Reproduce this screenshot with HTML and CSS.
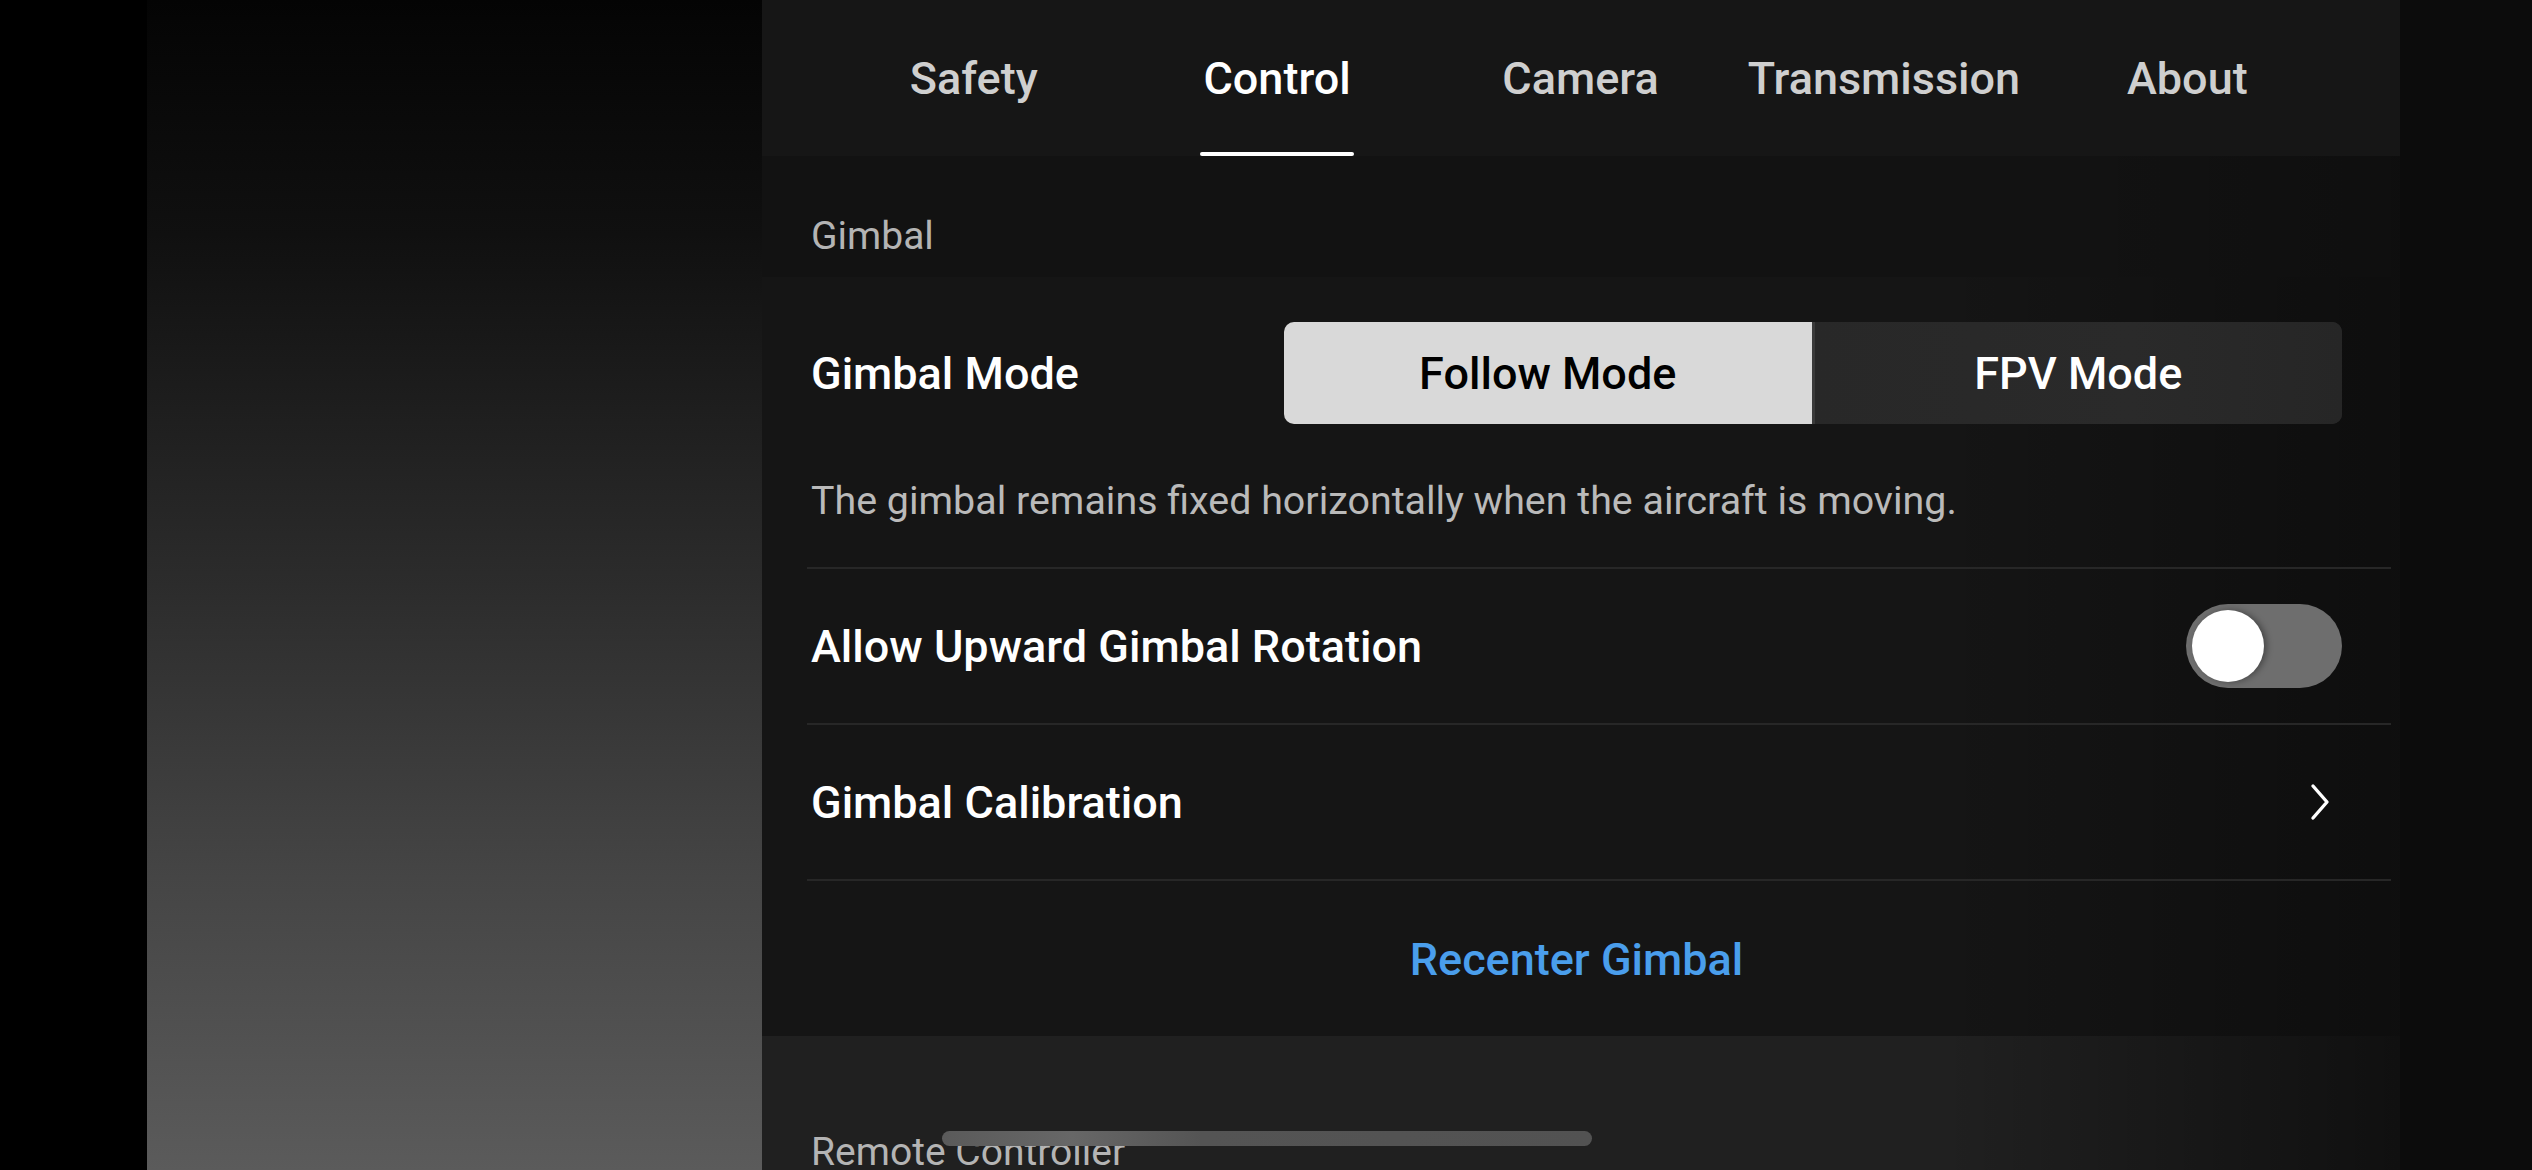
FILE: index.html
```html
<!DOCTYPE html>
<html lang="en">
<head>
<meta charset="utf-8">
<title>Control</title>
<link rel="stylesheet" href="styles.css">
</head>
<body>
<div class="screen">
  <div class="edge"></div>
  <div class="preview"></div>
  <main class="panel">
    <nav class="tabs">
      <div class="tab"><span class="tab-label">Safety</span></div>
      <div class="tab active"><span class="tab-label">Control</span></div>
      <div class="tab"><span class="tab-label">Camera</span></div>
      <div class="tab"><span class="tab-label">Transmission</span></div>
      <div class="tab"><span class="tab-label">About</span></div>
    </nav>
    <div class="section-head"><span class="section-label">Gimbal</span></div>
    <section class="card">
      <div class="mode-block">
        <div class="mode-row">
          <span class="row-title">Gimbal Mode</span>
          <div class="segmented">
            <div class="seg seg-on">Follow Mode</div>
            <div class="seg seg-off">FPV Mode</div>
          </div>
        </div>
        <p class="desc">The gimbal remains fixed horizontally when the aircraft is moving.</p>
      </div>
      <div class="row">
        <span class="row-title">Allow Upward Gimbal Rotation</span>
        <div class="toggle"><div class="thumb"></div></div>
      </div>
      <div class="row">
        <span class="row-title">Gimbal Calibration</span>
        <svg class="chevron" width="22" height="38" viewBox="0 0 22 38"><path d="M4 3 L18 19 L4 35" fill="none" stroke="#ffffff" stroke-width="3.4" stroke-linecap="round" stroke-linejoin="round"/></svg>
      </div>
      <div class="row row-last">
        <span class="action">Recenter Gimbal</span>
      </div>
    </section>
    <div class="bottom">
      <span class="section-label">Remote Controller</span>
    </div>
    <div class="scroll-indicator"></div>
  </main>
  <div class="right-strip"></div>
</div>
</body>
</html>
```

FILE: styles.css
```css
* { box-sizing: border-box; }

html, body {
  margin: 0;
  padding: 0;
  background: #000;
}

body {
  font-family: Roboto, "Noto Sans", "Liberation Sans", sans-serif;
  color: #fff;
}

.screen {
  width: 2532px;
  height: 1170px;
  display: flex;
  overflow: hidden;
}

.edge {
  width: 147px;
  flex: none;
  background: #000;
}

.preview {
  width: 615px;
  flex: none;
  background: linear-gradient(to bottom, #040404 0%, #101010 20%, #2c2c2c 50%, #454545 75%, #5b5b5b 100%);
}

.panel {
  width: 1638px;
  flex: none;
  position: relative;
  display: flex;
  flex-direction: column;
  background: linear-gradient(to right, rgba(0,0,0,0) 80%, rgba(0,0,0,0.2) 100%), #121212;
}

.right-strip {
  flex: 1;
  background: #0c0c0c;
}

/* tabs */
.tabs {
  height: 156px;
  flex: none;
  display: flex;
  padding: 0 61px 0 60px;
  background: #161616;
}

.tab {
  flex: 1;
  display: flex;
  justify-content: center;
}

.tab-label {
  position: relative;
  display: flex;
  align-items: center;
  height: 156px;
  font-size: 45px;
  line-height: 45px;
  font-weight: 500;
  color: #cfcfcf;
}

.tab.active .tab-label {
  color: #ffffff;
}

.tab.active .tab-label::after {
  content: "";
  position: absolute;
  left: -3px;
  right: -3px;
  bottom: 0;
  height: 4px;
  border-radius: 2px;
  background: #ffffff;
}

/* section headers */
.section-head {
  height: 121px;
  flex: none;
  padding: 62px 0 0 49px;
}

.section-label {
  display: block;
  font-size: 39px;
  line-height: 36px;
  color: #b4b4b4;
}

/* card */
.card {
  width: 1629px;
  flex: none;
  padding-left: 45px;
  background: linear-gradient(to right, rgba(0,0,0,0) 72%, rgba(0,0,0,0.35) 100%), #151515;
}

.mode-block {
  padding: 45px 49px 0 4px;
  border-bottom: 2px solid #272727;
}

.mode-row {
  display: flex;
  align-items: center;
  justify-content: space-between;
  height: 102px;
}

.row-title {
  font-size: 45px;
  line-height: 46px;
  font-weight: 500;
  color: #ffffff;
  padding-top: 2px;
}

.segmented {
  width: 1058px;
  height: 102px;
  display: flex;
  border-radius: 10px;
  overflow: hidden;
  background: #282828;
}

.seg {
  flex: 1;
  display: flex;
  align-items: center;
  justify-content: center;
  font-size: 45px;
  line-height: 46px;
  font-weight: 500;
  padding-top: 2px;
}

.seg-on {
  background: #d9d9d9;
  color: #000;
  border-right: 3px solid #3a3a3a;
}

.seg-off {
  background: linear-gradient(to right, #282828 0%, #2a2a2a 60%, #262626 100%);
  color: #fff;
}

.desc {
  margin: 58px 0 47px;
  font-size: 39.4px;
  line-height: 38px;
  color: #bababa;
}

.row {
  height: 156px;
  display: flex;
  align-items: center;
  justify-content: space-between;
  padding: 0 49px 0 4px;
  border-bottom: 2px solid #272727;
}

.row-last {
  height: 155px;
  border-bottom: none;
  justify-content: center;
  padding: 0 45px 0 0;
}

.action {
  font-size: 45px;
  line-height: 46px;
  font-weight: 500;
  color: #4a9eec;
  padding-top: 2px;
}

.toggle {
  width: 156px;
  height: 84px;
  border-radius: 42px;
  background: #6e6e6e;
  padding: 6px;
  display: flex;
  align-items: center;
}

.thumb {
  width: 72px;
  height: 72px;
  border-radius: 50%;
  background: #ffffff;
  box-shadow: 3px 0 6px rgba(0,0,0,0.35);
}

.chevron {
  margin-right: 11px;
}

/* bottom */
.bottom {
  flex: 1;
  padding: 98px 0 0 49px;
  background: linear-gradient(to right, rgba(0,0,0,0) 72%, rgba(0,0,0,0.5) 100%), #202020;
}

.scroll-indicator {
  position: absolute;
  left: 180px;
  top: 1131px;
  width: 650px;
  height: 15px;
  border-radius: 8px;
  background: linear-gradient(to right, #5a5a5a 0%, #676767 20%, #545454 40%, #525252 100%);
}
```
